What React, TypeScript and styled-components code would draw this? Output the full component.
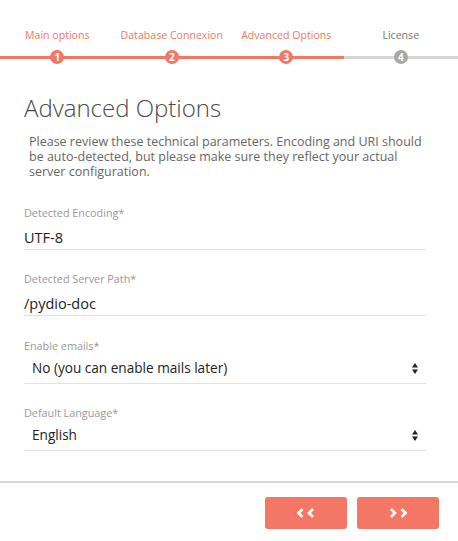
import React from "react";
import styled, { createGlobalStyle } from "styled-components";

const ACCENT = "#f47664";

const Global = createGlobalStyle`
  html, body { margin: 0; padding: 0; background: #fff; }
  body { font-family: "Open Sans", "Liberation Sans", sans-serif; }
  * { box-sizing: border-box; }
`;

const Page = styled.div`
  width: 458px;
  height: 541px;
  display: flex;
  flex-direction: column;
  background: #fff;
`;

const Stepper = styled.div`
  display: grid;
  grid-template-columns: repeat(4, 1fr);
  padding-top: 27px;
`;

const Step = styled.div`
  display: flex;
  flex-direction: column;
  align-items: center;
`;

const StepLabel = styled.div<{ $active: boolean }>`
  font-size: 10.6px;
  line-height: 16px;
  color: ${(p) => (p.$active ? ACCENT : "#777")};
  white-space: nowrap;
  height: 16px;
`;

const Track = styled.div<{ $active: boolean }>`
  position: relative;
  align-self: stretch;
  height: 14px;
  margin-top: 7px;
  display: flex;
  align-items: center;
  justify-content: center;
  &::before {
    content: "";
    position: absolute;
    left: 0;
    right: 0;
    top: 6px;
    height: 3px;
    background: ${(p) => (p.$active ? ACCENT : "#d6d6d6")};
  }
`;

const Dot = styled.div<{ $active: boolean }>`
  position: relative;
  width: 14px;
  height: 14px;
  border-radius: 50%;
  background: ${(p) => (p.$active ? ACCENT : "#a8a8a8")};
  color: #fff;
  font-size: 10px;
  font-weight: 700;
  line-height: 14px;
  text-align: center;
`;

const Content = styled.div`
  flex: 1;
  padding: 0 32px 0 24px;
`;

const Title = styled.h1`
  margin: 28px 0 0 0;
  font-size: 24px;
  font-weight: 300;
  line-height: 32px;
  color: #4a4a4a;
`;

const Intro = styled.p`
  margin: 10px 0 0 5px;
  font-size: 12.5px;
  line-height: 15px;
  color: #666;
`;

const Field = styled.div<{ $gap: number }>`
  margin-top: ${(p) => p.$gap}px;
  border-bottom: 1px solid #e2e2e2;
`;

const Label = styled.div`
  font-size: 10.8px;
  line-height: 14px;
  color: #999;
`;

const Value = styled.div<{ $select?: boolean }>`
  display: flex;
  align-items: center;
  justify-content: space-between;
  font-size: ${(p) => (p.$select ? "13.6px" : "14.5px")};
  line-height: 20px;
  color: #222;
  padding: ${(p) => (p.$select ? "5px 8px 5px 8px" : "8px 0 1px 0")};
`;

const Arrows = () => (
  <svg width="6" height="11" viewBox="0 0 6 11">
    <path d="M3 0 L6 4.5 L0 4.5 Z" fill="#222" />
    <path d="M0 6.5 L6 6.5 L3 11 Z" fill="#222" />
  </svg>
);

const Footer = styled.div`
  border-top: 2px solid #d8d8d8;
  display: flex;
  justify-content: flex-end;
  gap: 10px;
  padding: 14px 19px 12px 0;
`;

const NavButton = styled.button`
  width: 82px;
  height: 32px;
  border: none;
  border-radius: 3px;
  background: ${ACCENT};
  color: #fff;
  display: flex;
  align-items: center;
  justify-content: center;
  cursor: pointer;
`;

const Chevrons = ({ dir }: { dir: "left" | "right" }) => (
  <svg width="20" height="10" viewBox="0 0 20 10">
    {dir === "left" ? (
      <>
        <path d="M6.5 1 L2.5 5 L6.5 9" stroke="#fff" strokeWidth="2.6" fill="none" />
        <path d="M17 1 L13 5 L17 9" stroke="#fff" strokeWidth="2.6" fill="none" />
      </>
    ) : (
      <>
        <path d="M3 1 L7 5 L3 9" stroke="#fff" strokeWidth="2.6" fill="none" />
        <path d="M13.5 1 L17.5 5 L13.5 9" stroke="#fff" strokeWidth="2.6" fill="none" />
      </>
    )}
  </svg>
);

const steps = [
  { label: "Main options", active: true, track: true },
  { label: "Database Connexion", active: true, track: true },
  { label: "Advanced Options", active: true, track: true },
  { label: "License", active: false, track: false },
];

export default function App() {
  return (
    <>
      <Global />
      <Page>
        <Stepper>
          {steps.map((s, i) => (
            <Step key={s.label}>
              <StepLabel $active={s.active}>{s.label}</StepLabel>
              <Track $active={s.track}>
                <Dot $active={s.active}>{i + 1}</Dot>
              </Track>
            </Step>
          ))}
        </Stepper>
        <Content>
          <Title>Advanced Options</Title>
          <Intro>
            Please review these technical parameters. Encoding and URI should be
            auto-detected, but please make sure they reflect your actual server
            configuration.
          </Intro>
          <Field $gap={27}>
            <Label>Detected Encoding*</Label>
            <Value>UTF-8</Value>
          </Field>
          <Field $gap={22}>
            <Label>Detected Server Path*</Label>
            <Value>/pydio-doc</Value>
          </Field>
          <Field $gap={23}>
            <Label>Enable emails*</Label>
            <Value $select>
              <span>No (you can enable mails later)</span>
              <Arrows />
            </Value>
          </Field>
          <Field $gap={22}>
            <Label>Default Language*</Label>
            <Value $select>
              <span>English</span>
              <Arrows />
            </Value>
          </Field>
        </Content>
        <Footer>
          <NavButton aria-label="previous">
            <Chevrons dir="left" />
          </NavButton>
          <NavButton aria-label="next">
            <Chevrons dir="right" />
          </NavButton>
        </Footer>
      </Page>
    </>
  );
}
